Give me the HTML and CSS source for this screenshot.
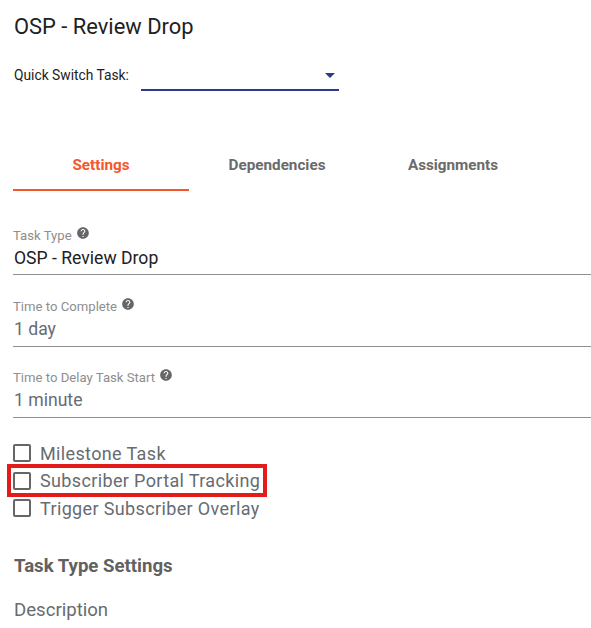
FILE: index.html
```html
<!DOCTYPE html>
<html lang="en">
<head>
  <meta charset="UTF-8">
  <title>OSP - Review Drop</title>
  <link rel="stylesheet" href="styles.css">
</head>
<body>
  <h1>OSP - Review Drop</h1>

  <div class="quick-switch">
    <span class="quick-label">Quick Switch Task:</span>
    <div class="select">
      <span class="select-arrow"></span>
    </div>
  </div>

  <div class="tabs">
    <div class="tab active">Settings</div>
    <div class="tab">Dependencies</div>
    <div class="tab">Assignments</div>
  </div>

  <div class="field first">
    <div class="field-label">Task Type
      <svg class="help" viewBox="0 0 24 24"><path d="M12 2C6.48 2 2 6.48 2 12s4.48 10 10 10 10-4.48 10-10S17.52 2 12 2zm1 17h-2v-2h2v2zm2.07-7.75l-.9.92C13.45 12.9 13 13.5 13 15h-2v-.5c0-1.1.45-2.1 1.17-2.83l1.24-1.26c.37-.36.59-.86.59-1.41 0-1.1-.9-2-2-2s-2 .9-2 2H8c0-2.21 1.79-4 4-4s4 1.79 4 4c0 .88-.36 1.68-.93 2.25z"/></svg>
    </div>
    <div class="field-value dark">OSP - Review Drop</div>
  </div>

  <div class="field">
    <div class="field-label">Time to Complete
      <svg class="help" viewBox="0 0 24 24"><path d="M12 2C6.48 2 2 6.48 2 12s4.48 10 10 10 10-4.48 10-10S17.52 2 12 2zm1 17h-2v-2h2v2zm2.07-7.75l-.9.92C13.45 12.9 13 13.5 13 15h-2v-.5c0-1.1.45-2.1 1.17-2.83l1.24-1.26c.37-.36.59-.86.59-1.41 0-1.1-.9-2-2-2s-2 .9-2 2H8c0-2.21 1.79-4 4-4s4 1.79 4 4c0 .88-.36 1.68-.93 2.25z"/></svg>
    </div>
    <div class="field-value">1 day</div>
  </div>

  <div class="field">
    <div class="field-label">Time to Delay Task Start
      <svg class="help" viewBox="0 0 24 24"><path d="M12 2C6.48 2 2 6.48 2 12s4.48 10 10 10 10-4.48 10-10S17.52 2 12 2zm1 17h-2v-2h2v2zm2.07-7.75l-.9.92C13.45 12.9 13 13.5 13 15h-2v-.5c0-1.1.45-2.1 1.17-2.83l1.24-1.26c.37-.36.59-.86.59-1.41 0-1.1-.9-2-2-2s-2 .9-2 2H8c0-2.21 1.79-4 4-4s4 1.79 4 4c0 .88-.36 1.68-.93 2.25z"/></svg>
    </div>
    <div class="field-value">1 minute</div>
  </div>

  <div class="checks">
    <div class="check"><span class="box"></span>Milestone Task</div>
    <div class="check highlighted"><span class="box"></span>Subscriber Portal Tracking</div>
    <div class="check"><span class="box"></span>Trigger Subscriber Overlay</div>
  </div>

  <h2>Task Type Settings</h2>
  <div class="description">Description</div>
</body>
</html>
```

FILE: styles.css
```css
html, body {
  height: 100%;
}
body {
  font-family: Roboto, sans-serif;
  background-color: white;
  margin: 0;
  padding: 0 0 0 13px;
  box-sizing: border-box;
  overflow: hidden;
}
h1 {
  margin: 0;
  padding: 13px 0 0 1px;
  font-size: 21.9px;
  line-height: 28px;
  font-weight: 400;
  color: #212121;
}
.quick-switch {
  display: flex;
  align-items: flex-start;
  margin-top: 16px;
  padding-left: 1px;
}
.quick-label {
  width: 127px;
  font-size: 13.8px;
  line-height: 36px;
  height: 34px;
  color: #212121;
}
.select {
  width: 198px;
  height: 34px;
  box-sizing: border-box;
  border-bottom: 2px solid #2a3a8c;
  position: relative;
}
.select-arrow {
  position: absolute;
  right: 4px;
  top: 16px;
  width: 0;
  height: 0;
  border-left: 5px solid transparent;
  border-right: 5px solid transparent;
  border-top: 5px solid #2a3a8c;
}
.tabs {
  display: flex;
  margin-top: 49px;
}
.tab {
  width: 176px;
  height: 51px;
  line-height: 50px;
  text-align: center;
  font-size: 15.25px;
  font-weight: 700;
  color: #6b6b6b;
  box-sizing: border-box;
}
.tab.active {
  color: #f4572c;
  border-bottom: 2px solid #f4572c;
}
.field {
  margin-top: 19.5px;
  padding-top: 3px;
  border-bottom: 1px solid #8f8f8f;
  height: 52px;
  box-sizing: border-box;
}
.field.first {
  margin-top: 32.2px;
  padding-top: 4px;
}
.field-label {
  font-size: 13.15px;
  line-height: 18px;
  color: #8e8e8e;
  display: flex;
  align-items: flex-start;
  gap: 4px;
}
.help {
  width: 14px;
  height: 14px;
  fill: #666;
  margin-top: -1px;
}
.field-value {
  font-size: 17.6px;
  line-height: 26px;
  padding-left: 1px;
  color: #666c72;
}
.field-value.dark {
  color: #212121;
}
.checks {
  margin-top: 21.2px;
}
.check {
  display: flex;
  align-items: center;
  height: 27.5px;
  font-size: 18px;
  letter-spacing: 0.36px;
  color: #666c72;
  position: relative;
}
.box {
  width: 14px;
  height: 14px;
  border: 2px solid #666;
  border-radius: 2px;
  margin-right: 9px;
  flex: none;
}
.highlighted::after {
  content: "";
  position: absolute;
  left: -6px;
  top: -3px;
  width: 260px;
  height: 33px;
  box-sizing: border-box;
  border: 4px solid #e31b1b;
}
h2 {
  margin: 30.8px 0 0 1px;
  font-size: 18.6px;
  line-height: 26px;
  font-weight: 700;
  color: #616161;
}
.description {
  margin: 18px 0 0 1px;
  font-size: 18.6px;
  line-height: 26px;
  color: #666c72;
}
```
